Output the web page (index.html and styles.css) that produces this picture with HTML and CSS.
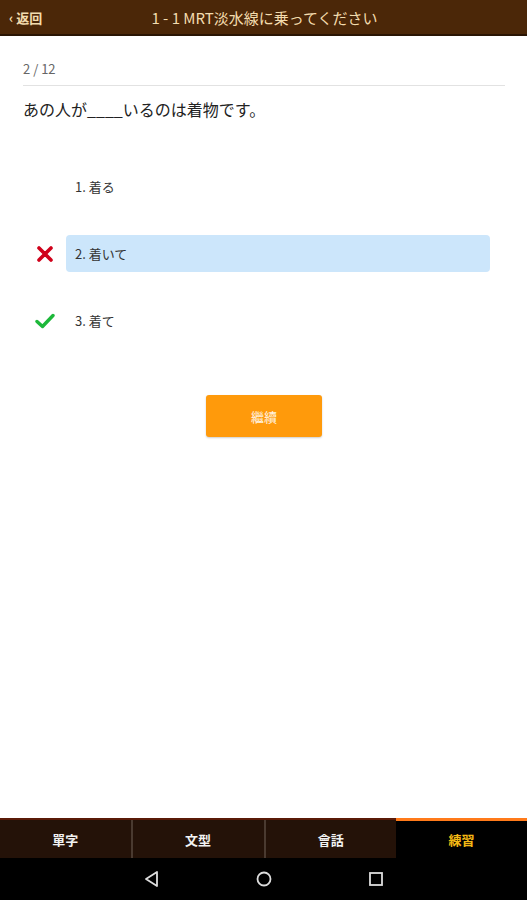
FILE: index.html
```html
<!DOCTYPE html>
<html>
<head>
    <title>練習</title>
    <link rel="stylesheet" href="styles.css">
</head>
<body>
    <div class="app">
        <div class="topbar">
            <span class="back">‹ 返回</span>
            <span class="title">1 - 1 MRT淡水線に乗ってください</span>
        </div>

        <div class="content">
            <div class="progress">2 / 12</div>
            <div class="question">あの人が____いるのは着物です。</div>

            <div class="options">
                <div class="option">
                    <span class="mark"></span>
                    <span class="label">1. 着る</span>
                </div>
                <div class="option">
                    <span class="mark">
                        <svg width="16" height="16" viewBox="0 0 16 16"><path d="M2 2 L14 14 M14 2 L2 14" stroke="#d0021b" stroke-width="3.6" stroke-linecap="round"/></svg>
                    </span>
                    <span class="label selected">2. 着いて</span>
                </div>
                <div class="option">
                    <span class="mark">
                        <svg width="20" height="16" viewBox="0 0 20 16"><path d="M2 8.5 L7.5 13.5 L18 2.5" stroke="#1db83a" stroke-width="3.4" fill="none" stroke-linecap="round" stroke-linejoin="round"/></svg>
                    </span>
                    <span class="label">3. 着て</span>
                </div>
            </div>

            <div class="actions">
                <button class="next">繼續</button>
            </div>
        </div>

        <div class="tabs">
            <div class="tab">單字</div>
            <div class="tab">文型</div>
            <div class="tab">會話</div>
            <div class="tab active">練習</div>
        </div>

        <div class="navbar">
            <svg width="18" height="18" viewBox="0 0 18 18"><path d="M14 2 L3 9 L14 16 Z" stroke="#ddd" stroke-width="1.8" fill="none" stroke-linejoin="round"/></svg>
            <svg width="18" height="18" viewBox="0 0 18 18"><circle cx="9" cy="9" r="6.5" stroke="#ddd" stroke-width="1.8" fill="none"/></svg>
            <svg width="18" height="18" viewBox="0 0 18 18"><rect x="3" y="3" width="12" height="12" stroke="#ddd" stroke-width="1.8" fill="none"/></svg>
        </div>
    </div>
</body>
</html>
```

FILE: styles.css
```css
body {
    margin: 0;
    font-family: "Noto Sans CJK JP", "Noto Sans CJK TC", sans-serif;
    background: #fff;
}
.app {
    display: flex;
    flex-direction: column;
    height: 900px;
}
.topbar {
    height: 34px;
    background: #4b2708;
    border-bottom: 2px solid #2a1504;
    display: flex;
    align-items: center;
    position: relative;
    color: #f3dcae;
    font-size: 15px;
}
.back {
    padding-left: 9px;
    font-size: 13px;
    font-weight: bold;
    position: relative;
    z-index: 1;
}
.title {
    position: absolute;
    left: 0;
    right: 0;
    text-align: center;
    padding-left: 2px;
}
.content {
    flex: 1;
    padding: 0 22px 0 23px;
}
.progress {
    margin-top: 24px;
    font-size: 13px;
    color: #666;
    padding-bottom: 7px;
    border-bottom: 1px solid #e2e2e2;
    line-height: 18px;
}
.question {
    margin-top: 12px;
    font-size: 16px;
    color: #222;
    line-height: 22px;
}
.options {
    margin-top: 48px;
    margin-right: 15px;
    display: flex;
    flex-direction: column;
    gap: 30px;
}
.option {
    display: flex;
    align-items: center;
    height: 37px;
}
.mark {
    width: 43px;
    display: flex;
    justify-content: center;
}
.label {
    flex: 1;
    height: 37px;
    display: flex;
    align-items: center;
    padding-left: 9px;
    font-size: 13px;
    color: #333;
    border-radius: 4px;
}
.label.selected {
    background: #cce6fb;
}
.actions {
    display: flex;
    justify-content: center;
    margin-top: 56px;
}
.next {
    width: 116px;
    height: 42px;
    background: #ff9a0b;
    border: none;
    border-radius: 3px;
    color: #fff3e0;
    font-family: inherit;
    font-size: 13px;
    box-shadow: 0 1px 2px rgba(0,0,0,0.2);
}
.tabs {
    display: flex;
    height: 38px;
    background: #241208;
    border-top: 2px solid #5a1a08;
}
.tab {
    flex: 1;
    display: flex;
    align-items: center;
    justify-content: center;
    color: #f2f2f2;
    font-size: 13px;
    font-weight: bold;
    border-left: 2px solid #4a3a30;
}
.tab:first-child {
    border-left: none;
}
.tab.active {
    background: #000;
    color: #f3b814;
    border-left: none;
    position: relative;
}
.tab.active::before {
    content: "";
    position: absolute;
    left: 0;
    right: 0;
    top: -2px;
    height: 3px;
    background: #ff7a1a;
}
.navbar {
    height: 42px;
    background: #000;
    display: flex;
    align-items: center;
    justify-content: center;
    gap: 94px;
}
```
